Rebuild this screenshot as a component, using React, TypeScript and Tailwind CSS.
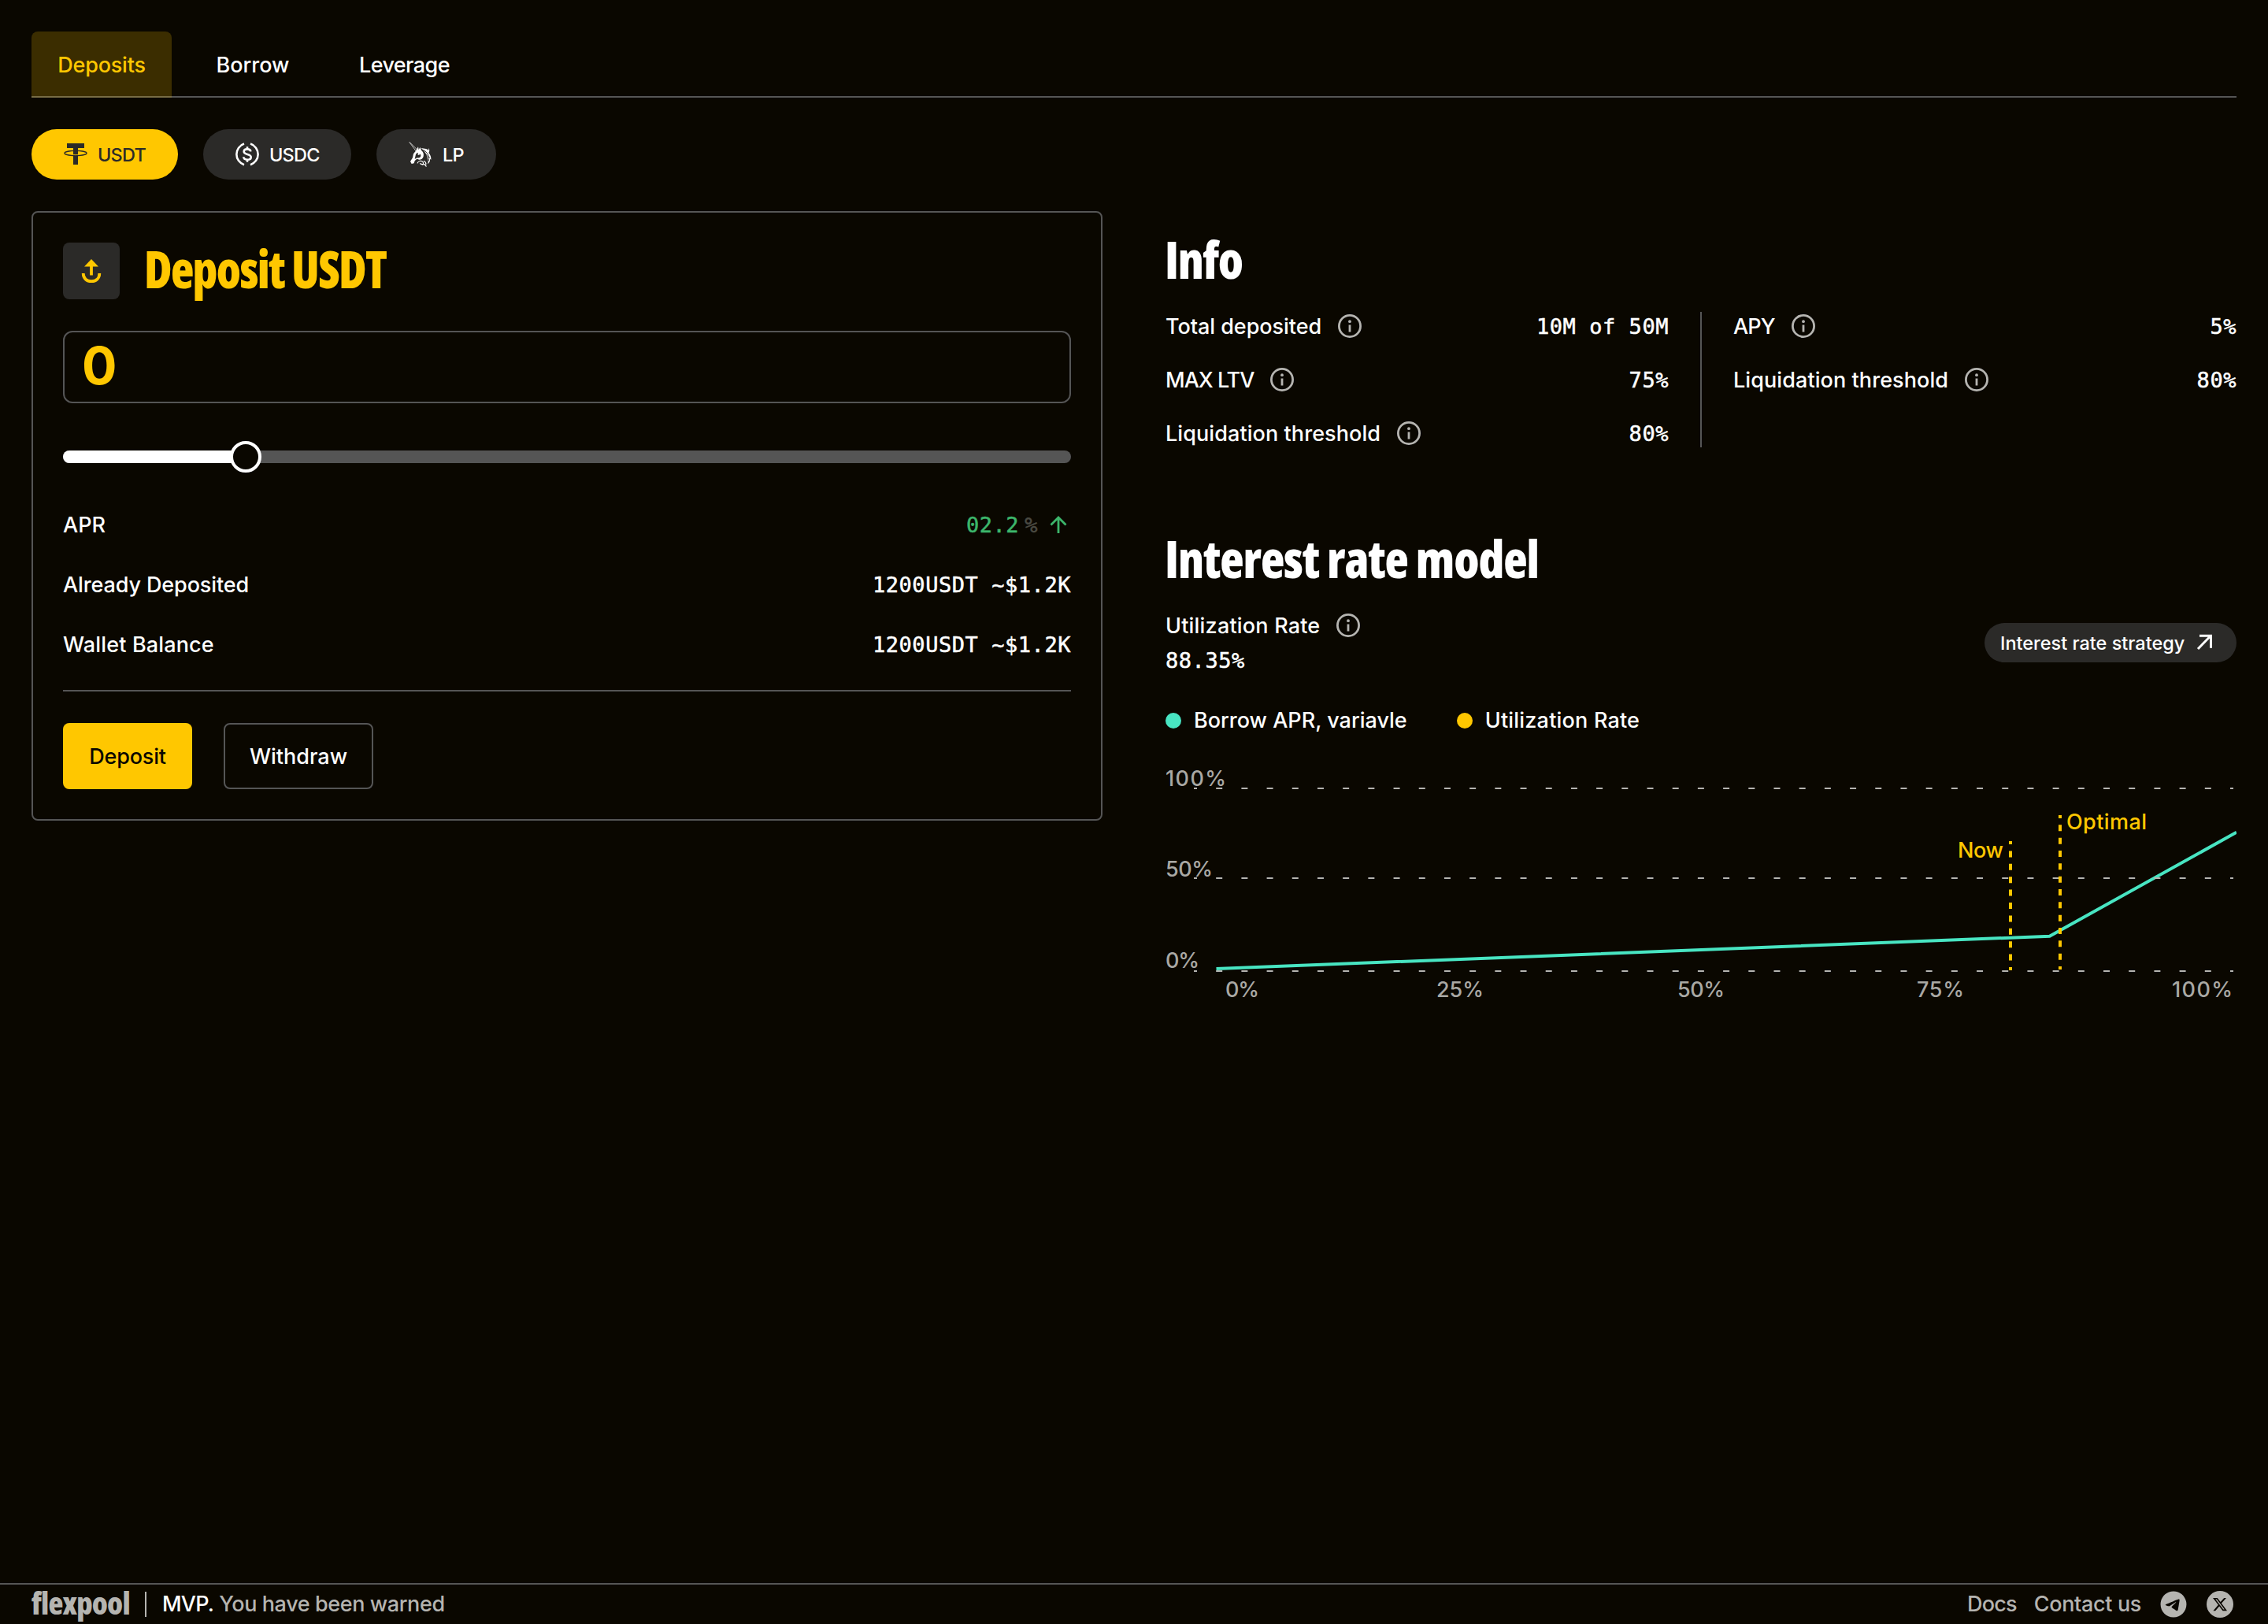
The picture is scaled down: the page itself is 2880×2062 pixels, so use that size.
import { type ReactNode } from "react";
import { clsx } from "clsx";
import { FaTelegram, FaXTwitter } from "react-icons/fa6";

const DISPLAY = "font-['Open_Sans',sans-serif] font-extrabold [font-stretch:75%] whitespace-nowrap origin-left";
const MONO =
  "font-['DejaVu_Sans_Mono',monospace] tracking-[0.55px] whitespace-pre [-webkit-text-stroke:0.5px_currentColor]";

function TetherIcon() {
  return (
    <svg viewBox="0 0 32 32" className="w-8 h-8" fill="none">
      <path d="M5 2h22v6h-8v21h-6V8H5z" fill="currentColor" />
      <ellipse cx="16" cy="14.5" rx="14" ry="3.1" stroke="currentColor" strokeWidth="1.3" />
      <path d="M13 16.4c2 .4 4 .4 6 0" stroke="#FFC700" strokeWidth="0.8" />
    </svg>
  );
}

function UsdcIcon() {
  return (
    <svg viewBox="0 0 32 32" className="w-8 h-8" fill="none" stroke="currentColor" strokeWidth="2.6">
      <path d="M12 2.6a14 14 0 0 0 0 26.6M20 2.6a14 14 0 0 1 0 26.6" />
      <path d="M16 6.2v3.2M16 22.6v3.2" />
      <path d="M20.4 12.4c-.3-1.9-2-3-4.4-3-2.6 0-4.300 1.200-4.300 3.100 0 4.600 9 2.200 9 6.900 0 2-1.900 3.300-4.700 3.300-2.700 0-4.600-1.300-4.700-3.400" />
    </svg>
  );
}

function UnicornIcon() {
  return (
    <svg viewBox="0 0 96 96" className="w-8 h-8" fill="none" stroke="currentColor">
      <path d="M5 1l27 36M7 2l31 31" strokeWidth="2" />
      {/* head */}
      <path
        d="M39 19l2 12 5-10 6 13c7 5 9 13 7 22-2 8-8 12-16 12l-9-3-8 8-3 9-9 2-5-9 9-14 3-15 8-10z"
        fill="currentColor"
        stroke="none"
      />
      <path d="M30 48l6-7 5 5c6 0 9 4 8 9-2 6-8 8-14 6l-9 5z" fill="#2B2A28" stroke="none" />
      <circle cx="41" cy="47" r="3.500" fill="currentColor" stroke="none" />
      {/* mane */}
      <path
        d="M50 24l19 3c4 1 7 3 9 6l2-9c3 9 2 14-1 18 7 8 10 17 9 27l-4-4c1 9-2 15-9 20 3-9 3-15-1-22-2-15-9-26-24-39z"
        fill="currentColor"
        stroke="none"
      />
      <path d="M58 31c12 6 19 16 24 32M65 44c8 7 13 16 15 28" stroke="#2B2A28" strokeWidth="3" />
      {/* neck curls */}
      <path d="M36 82c3-9 15-12 21-5 4 6 1 11-4 10M46 82c3 5 9 4 14 4s8 3 10 9M60 73c6 3 9 7 9 13" strokeWidth="3.500" />
    </svg>
  );
}

function DepositIcon() {
  return (
    <svg viewBox="0 0 32 32" className="w-8 h-8" fill="none">
      <path d="M16 1l9 9.500H7z" fill="#FFC700" />
      <path d="M16 8v13.500" stroke="#FFC700" strokeWidth="3.8" />
      <path d="M5.700 19c0 6.500 4.500 10.200 10.300 10.200S26.300 25.500 26.300 19" stroke="#FFC700" strokeWidth="3.800" />
    </svg>
  );
}

function InfoIcon() {
  return (
    <svg viewBox="0 0 36 36" className="w-9 h-9 shrink-0" fill="none" stroke="#B5B4B0">
      <circle cx="18" cy="18" r="13.600" strokeWidth="2.8" />
      <circle cx="18" cy="12.200" r="1.900" fill="#B5B4B0" stroke="none" />
      <path d="M18 16.500v9" strokeWidth="2.800" />
    </svg>
  );
}

const tabs = [
  { label: "Deposits", style: "w-[178px] tracking-[-0.2px]", active: true },
  { label: "Borrow", style: "w-[158px]" },
  { label: "Leverage", style: "w-[179px] tracking-[-0.6px]" },
];

const tokens = [
  { label: "USDT", width: "w-[186px]", icon: <TetherIcon />, active: true },
  { label: "USDC", width: "w-[188px]", icon: <UsdcIcon /> },
  { label: "LP", width: "w-[152px]", icon: <UnicornIcon /> },
];

interface RowProps {
  label: string;
  info?: boolean;
  labelClass?: string;
  children?: ReactNode;
}

function Row({ label, info, labelClass, children }: RowProps) {
  return (
    <div className="flex h-9 items-center justify-between">
      <div className="flex items-center gap-[18px]">
        <span className={clsx("whitespace-nowrap pt-0.5", labelClass)}>{label}</span>
        {info && <InfoIcon />}
      </div>
      <div className={clsx("flex items-center pt-0.5", MONO)}>{children}</div>
    </div>
  );
}

function DepositCard() {
  return (
    <section className="w-[1360px] h-[774px] shrink-0 rounded-lg border-2 border-[#555555] p-[38px]">
      <div className="flex h-[72px] items-start gap-[31px]">
        <div className="flex h-[72px] w-[72px] items-center justify-center rounded-lg bg-[#2B2A28]">
          <DepositIcon />
        </div>
        <h1 className={clsx(DISPLAY, "scale-x-92 text-[66px] leading-[64px] tracking-[-1.8px] text-[#FFC700]")}>
          Deposit USDT
        </h1>
      </div>

      <div className="mt-10 flex h-[92px] items-center rounded-xl border-2 border-[#555555] pb-1 pl-[22px] text-[66px] font-bold text-[#FFC700]">
        0
      </div>

      <div className="relative mt-12 flex h-10 items-center">
        <div className="flex h-4 w-full overflow-hidden rounded-full bg-[#555555]">
          <div className="w-[232px] bg-white" />
        </div>
        <div className="absolute left-[212px] h-10 w-10 rounded-full border-4 border-white bg-[#0A0700]" />
      </div>

      <div className="mt-12 flex flex-col gap-10">
        <Row label="APR">
          <span className="text-[#3CB66B]">02.2</span>
          <span className="ml-[7px] text-[#4A4A42]">%</span>
          <svg viewBox="0 0 32 32" className="ml-2.5 h-8 w-8" fill="none" stroke="#3CB66B" strokeWidth="2.800">
            <path d="M16 26V6M6.500 15.500L16 6l9.500 9.500" />
          </svg>
        </Row>
        <Row label="Already Deposited" labelClass="tracking-[-0.12px]">
          1200USDT ~$1.2K
        </Row>
        <Row label="Wallet Balance" labelClass="tracking-[0.15px]">
          1200USDT ~$1.2K
        </Row>
      </div>

      <div className="mt-10 h-0.5 bg-[#555555]" />

      <div className="mt-10 flex gap-10">
        <button className="h-[84px] w-[164px] rounded-lg bg-[#FFC700] pt-0.5 tracking-[-0.2px] text-[#0A0700]">
          Deposit
        </button>
        <button className="h-[84px] w-[190px] rounded-lg border-2 border-[#555555] pt-0.5">Withdraw</button>
      </div>
    </section>
  );
}

function RateChart() {
  return (
    <svg viewBox="1480 960 1360 320" className="h-[320px] w-[1360px]" fontSize="27" fontWeight="500">
      <g fill="#A9A8A4">
        <text x="1480" y="998" textLength="77">100%</text>
        <text x="1480" y="1113" textLength="60">50%</text>
        <text x="1480" y="1229" textLength="43">0%</text>
        <text x="1556" y="1266" textLength="43">0%</text>
        <text x="1824" y="1266" textLength="60">25%</text>
        <text x="2130" y="1266" textLength="60">50%</text>
        <text x="2434" y="1266" textLength="60">75%</text>
        <text x="2758" y="1266" textLength="77">100%</text>
      </g>
      <path d="M1544.500 1230L2602.600 1188.700L2840 1056.800" fill="none" stroke="#48E5C2" strokeWidth="4" />
      <g stroke="#B5B4B0" strokeWidth="2" strokeDasharray="8 24.195" strokeDashoffset="4">
        <path d="M1516 1001H2836" />
        <path d="M1516 1115H2836" />
        <path d="M1516 1233H2836" />
      </g>
      <g stroke="#FFC700" strokeWidth="4" strokeDashoffset="4">
        <path d="M2553 1068V1232" strokeDasharray="8 8.400" />
        <path d="M2616 1035V1231" strokeDasharray="8 8.330" />
      </g>
      <g fill="#FFC700">
        <text x="2486" y="1089" textLength="58">Now</text>
        <text x="2624" y="1053" textLength="102">Optimal</text>
      </g>
    </svg>
  );
}

function InfoPanel() {
  return (
    <section className="w-[1360px] pt-7">
      <h2 className={clsx(DISPLAY, "-ml-px scale-x-95 text-[66px] leading-[64px] tracking-[-1.4px]")}>Info</h2>
      <div className="mt-9 flex h-[172px] gap-10">
        <div className="flex flex-1 flex-col gap-8">
          <Row label="Total deposited" labelClass="tracking-[-0.05px]" info>
            10M of 50M
          </Row>
          <Row label="MAX LTV" labelClass="tracking-[-1px]" info>
            75%
          </Row>
          <Row label="Liquidation threshold" labelClass="tracking-[0.08px]" info>
            80%
          </Row>
        </div>
        <div className="w-0.5 bg-[#555555]" />
        <div className="flex flex-1 flex-col gap-8">
          <Row label="APY" labelClass="tracking-[-0.8px]" info>
            5%
          </Row>
          <Row label="Liquidation threshold" labelClass="tracking-[0.08px]" info>
            80%
          </Row>
        </div>
      </div>

      <h2 className={clsx(DISPLAY, "mt-[108px] -ml-px scale-x-95 text-[66px] leading-[64px] tracking-[-1.1px]")}>
        Interest rate model
      </h2>
      <div className="mt-9 flex h-20 items-center justify-between">
        <div className="flex flex-col gap-2">
          <Row label="Utilization Rate" labelClass="tracking-[0.2px]" info />
          <span className={clsx(MONO, "h-9 pt-px")}>88.35%</span>
        </div>
        <button className="flex h-[50px] w-[320px] items-center justify-between rounded-full bg-[#2B2A28] pl-5 pr-[26px] text-[23.5px]">
          <span className="whitespace-nowrap pt-0.5">Interest rate strategy</span>
          <svg viewBox="0 0 28 28" className="mb-0.5 h-7 w-7" fill="none" stroke="currentColor" strokeWidth="3">
            <path d="M5 23L21 6.500M7 6.300h14.500v15.500" />
          </svg>
        </button>
      </div>

      <div className="mt-10 flex h-9 items-center gap-[63px] pt-0.5">
        <div className="flex items-center gap-4">
          <span className="h-5 w-5 rounded-full bg-[#48E5C2]" />
          <span>Borrow APR, variavle</span>
        </div>
        <div className="flex items-center gap-4">
          <span className="h-5 w-5 rounded-full bg-[#FFC700]" />
          <span className="tracking-[0.2px]">Utilization Rate</span>
        </div>
      </div>

      <div className="mt-7">
        <RateChart />
      </div>
    </section>
  );
}

function Footer() {
  return (
    <footer className="flex h-[52px] items-center justify-between border-t-2 border-[#555555] pl-10 pr-11 text-[#B5B4B0]">
      <div className="flex items-center">
        <span className={clsx(DISPLAY, "w-[144px] pb-1 text-[39px] leading-[44px] tracking-[-0.8px]")}>flexpool</span>
        <span className="h-8 w-0.5 bg-[#B5B4B0]" />
        <span className="ml-5 tracking-[-0.8px] text-white">MVP.</span>
        <span className="ml-[7px] tracking-[-0.4px]">You have been warned</span>
      </div>
      <div className="flex items-center">
        <span className="tracking-[-0.8px]">Docs</span>
        <span className="ml-[22px] tracking-[-0.35px]">Contact us</span>
        <FaTelegram className="ml-6 h-[34px] w-[34px]" />
        <span className="ml-[25px] flex h-[34px] w-[34px] items-center justify-center rounded-full bg-[#B5B4B0] text-[#0A0700]">
          <FaXTwitter className="h-5 w-5" />
        </span>
      </div>
    </footer>
  );
}

export default function App() {
  return (
    <div className="flex h-[2062px] w-full flex-col bg-[#0A0700] font-['Inter',sans-serif] text-[27px] font-medium leading-9 text-white">
      <main className="flex-1 px-10 pt-10">
        <nav className="flex h-[84px] gap-6 border-b-2 border-[#555555]">
          {tabs.map((tab) => (
            <div
              key={tab.label}
              className={clsx(
                "flex h-[84px] items-center justify-center pt-0.5",
                tab.style,
                tab.active && "rounded-t-lg bg-[#FFC700]/20 text-[#FFC700]"
              )}
            >
              {tab.label}
            </div>
          ))}
        </nav>

        <div className="mt-10 flex gap-8">
          {tokens.map((token) => (
            <button
              key={token.label}
              className={clsx(
                "flex h-16 items-center gap-3 rounded-full pl-10 text-[23.5px] tracking-[-0.8px]",
                token.width,
                token.active ? "bg-[#FFC700] text-[#2B2A28]" : "bg-[#2B2A28]"
              )}
            >
              {token.icon}
              <span className="pt-0.5">{token.label}</span>
            </button>
          ))}
        </div>

        <div className="mt-10 flex gap-20">
          <DepositCard />
          <InfoPanel />
        </div>
      </main>
      <Footer />
    </div>
  );
}
